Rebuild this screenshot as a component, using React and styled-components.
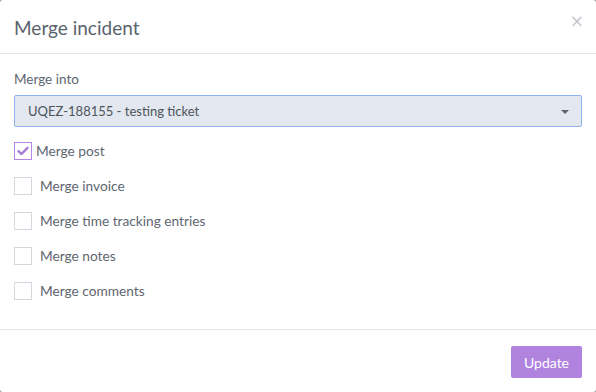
import React, { useState } from "react";
import styled, { createGlobalStyle } from "styled-components";

const GlobalStyle = createGlobalStyle`
  html, body {
    margin: 0;
    padding: 0;
    background: #9a9a9a;
  }
  body {
    font-family: Lato, "Open Sans", sans-serif;
  }
`;

const Modal = styled.div`
  width: 596px;
  height: 392px;
  background: #fff;
  border-radius: 3px;
  display: flex;
  flex-direction: column;
  box-sizing: border-box;
`;

const Header = styled.div`
  height: 54px;
  border-bottom: 1px solid #e5e5e5;
  display: flex;
  align-items: center;
  justify-content: space-between;
  padding: 0 14px;
  box-sizing: border-box;
`;

const Title = styled.h4`
  margin: 0;
  font-size: 19px;
  font-weight: 400;
  color: #5a636c;
  margin-top: 1px;
`;

const Close = styled.button`
  border: none;
  background: none;
  padding: 0;
  font-size: 17px;
  line-height: 1;
  color: #c8c8c8;
  font-family: "DejaVu Sans", sans-serif;
  align-self: flex-start;
  margin-top: 13px;
  margin-right: -2px;
  cursor: pointer;
`;

const Body = styled.div`
  flex: 1;
  padding: 17px 14px 0;
  border-bottom: 1px solid #e5e5e5;
`;

const Label = styled.div`
  font-size: 13.5px;
  color: #5e666f;
  margin-bottom: 8px;
`;

const Select = styled.div`
  height: 32px;
  background: #e3e7ef;
  border: 1px solid #8eb2ee;
  border-radius: 2px;
  box-sizing: border-box;
  display: flex;
  align-items: center;
  justify-content: space-between;
  padding: 0 12px 0 13px;
  font-size: 13px;
  color: #4c545c;
`;

const Caret = styled.span`
  width: 0;
  height: 0;
  border-left: 4px solid transparent;
  border-right: 4px solid transparent;
  border-top: 4px solid #5d666e;
  margin-top: 1px;
`;

const Options = styled.div`
  display: flex;
  flex-direction: column;
  margin-top: 6px;
`;

const Row = styled.label`
  display: flex;
  align-items: center;
  height: 35px;
  font-size: 13.7px;
  color: #5e666f;
  cursor: pointer;
`;

const Box = styled.span`
  width: 18px;
  height: 18px;
  box-sizing: border-box;
  border: 1px solid ${(p) => (p.$checked ? "#b685e3" : "#d3d8de")};
  display: flex;
  align-items: center;
  justify-content: center;
  margin-right: ${(p) => (p.$checked ? "4px" : "8px")};
  background: #fff;
`;

const Footer = styled.div`
  height: 62px;
  display: flex;
  align-items: center;
  justify-content: flex-end;
  padding: 0 14px;
`;

const Button = styled.button`
  width: 71px;
  height: 32px;
  background: #b083df;
  border: none;
  border-radius: 2px;
  color: #fff;
  font-family: Lato, "Open Sans", sans-serif;
  font-size: 14px;
  margin-top: 2px;
  cursor: pointer;
`;

const items = [
  { label: "Merge post", checked: true },
  { label: "Merge invoice", checked: false },
  { label: "Merge time tracking entries", checked: false },
  { label: "Merge notes", checked: false },
  { label: "Merge comments", checked: false },
];

function Check() {
  return (
    <svg width="12" height="10" viewBox="0 0 12 10">
      <path d="M1.5 5.2 L4.5 8 L10.5 1.8" fill="none" stroke="#a77bd6" strokeWidth="2.4" strokeLinecap="round" strokeLinejoin="round" />
    </svg>
  );
}

export default function App() {
  const [state, setState] = useState(items.map((i) => i.checked));

  const toggle = (idx) => {
    setState(state.map((v, i) => (i === idx ? !v : v)));
  };

  return (
    <>
      <GlobalStyle />
      <Modal>
        <Header>
          <Title>Merge incident</Title>
          <Close>×</Close>
        </Header>
        <Body>
          <Label>Merge into</Label>
          <Select>
            <span>UQEZ-188155 - testing ticket</span>
            <Caret />
          </Select>
          <Options>
            {items.map((item, idx) => (
              <Row key={item.label} onClick={() => toggle(idx)}>
                <Box $checked={state[idx]}>{state[idx] && <Check />}</Box>
                {item.label}
              </Row>
            ))}
          </Options>
        </Body>
        <Footer>
          <Button>Update</Button>
        </Footer>
      </Modal>
    </>
  );
}
